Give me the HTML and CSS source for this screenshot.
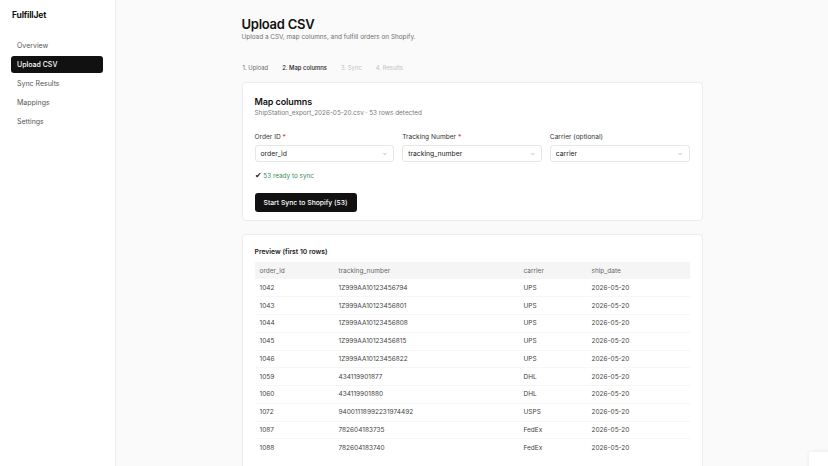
FILE: index.html
```html
<!DOCTYPE html>
<html lang="en">
<head>
<meta charset="utf-8">
<title>FulfillJet – Upload CSV</title>
<link rel="stylesheet" href="styles.css">
</head>
<body>
<div class="app">
  <aside class="sidebar">
    <div class="brand">FulfillJet</div>
    <nav class="nav">
      <a class="nav-item">Overview</a>
      <a class="nav-item active">Upload CSV</a>
      <a class="nav-item">Sync Results</a>
      <a class="nav-item">Mappings</a>
      <a class="nav-item">Settings</a>
    </nav>
  </aside>
  <main class="main">
    <div class="content">
      <header class="page-head">
        <h1 class="title">Upload CSV</h1>
        <p class="subtitle">Upload a CSV, map columns, and fulfill orders on Shopify.</p>
      </header>
      <div class="steps">
        <span class="step done">1. Upload</span>
        <span class="step current">2. Map columns</span>
        <span class="step todo">3. Sync</span>
        <span class="step todo">4. Results</span>
      </div>
      <section class="card map-card">
        <h2 class="card-title">Map columns</h2>
        <p class="file-line">ShipStation_export_2026-05-20.csv · 53 rows detected</p>
        <div class="fields">
          <div class="field">
            <label class="label">Order ID <span class="req">*</span></label>
            <div class="select"><span>order_id</span><span class="chev">⌄</span></div>
          </div>
          <div class="field">
            <label class="label">Tracking Number <span class="req">*</span></label>
            <div class="select"><span>tracking_number</span><span class="chev">⌄</span></div>
          </div>
          <div class="field">
            <label class="label">Carrier (optional)</label>
            <div class="select"><span>carrier</span><span class="chev">⌄</span></div>
          </div>
        </div>
        <p class="ready"><span class="check">✔</span> 53 ready to sync</p>
        <button class="btn">Start Sync to Shopify (53)</button>
      </section>
      <section class="card preview-card">
        <h3 class="preview-title">Preview (first 10 rows)</h3>
        <table class="table">
          <colgroup>
            <col class="c1"><col class="c2"><col class="c3"><col class="c4">
          </colgroup>
          <thead>
            <tr><th>order_id</th><th>tracking_number</th><th>carrier</th><th>ship_date</th></tr>
          </thead>
          <tbody>
            <tr><td>1042</td><td>1Z999AA10123456794</td><td>UPS</td><td>2026-05-20</td></tr>
            <tr><td>1043</td><td>1Z999AA10123456801</td><td>UPS</td><td>2026-05-20</td></tr>
            <tr><td>1044</td><td>1Z999AA10123456808</td><td>UPS</td><td>2026-05-20</td></tr>
            <tr><td>1045</td><td>1Z999AA10123456815</td><td>UPS</td><td>2026-05-20</td></tr>
            <tr><td>1046</td><td>1Z999AA10123456822</td><td>UPS</td><td>2026-05-20</td></tr>
            <tr><td>1059</td><td>434119901877</td><td>DHL</td><td>2026-05-20</td></tr>
            <tr><td>1060</td><td>434119901880</td><td>DHL</td><td>2026-05-20</td></tr>
            <tr><td>1072</td><td>94001118992231974492</td><td>USPS</td><td>2026-05-20</td></tr>
            <tr><td>1087</td><td>782604183735</td><td>FedEx</td><td>2026-05-20</td></tr>
            <tr><td>1088</td><td>782604183740</td><td>FedEx</td><td>2026-05-20</td></tr>
          </tbody>
        </table>
      </section>
    </div>
  </main>
</div>
<div class="corner-box"></div>
</body>
</html>
```

FILE: styles.css
```css
* { box-sizing: border-box; }
html, body {
  margin: 0;
  padding: 0;
  height: 100%;
  overflow: hidden;
}
body {
  font-family: Inter, "Noto Sans", "Liberation Sans", sans-serif;
  color: #1a1a1a;
  background: #fafafa;
  -webkit-font-smoothing: antialiased;
}
.app {
  display: flex;
  height: 466px;
}
.sidebar {
  width: 116px;
  flex: none;
  background: #ffffff;
  border-right: 1px solid #ededed;
  padding: 10px 12px 0 11px;
}
.brand {
  font-size: 8.5px;
  font-weight: 700;
  letter-spacing: -0.02em;
  color: #111;
  padding-left: 1px;
  line-height: 10px;
}
.nav {
  display: flex;
  flex-direction: column;
  gap: 2px;
  margin-top: 17px;
}
.nav-item {
  display: block;
  height: 17px;
  line-height: 17px;
  padding-left: 6px;
  font-size: 7px;
  color: #555;
  border-radius: 3px;
}
.nav-item.active {
  background: #111;
  color: #fff;
  font-weight: 500;
}
.main {
  flex: 1;
  background: #fafafa;
}
.content {
  width: 461px;
  margin: 0 auto;
  padding-top: 16px;
}
.title {
  margin: 0;
  font-size: 13px;
  font-weight: 600;
  letter-spacing: -0.02em;
  line-height: 16px;
  color: #111;
}
.subtitle {
  margin: 1px 0 0;
  font-size: 6.4px;
  color: #707070;
  line-height: 9px;
}
.steps {
  display: flex;
  gap: 14px;
  margin-top: 22px;
  margin-left: 1px;
  font-size: 5.9px;
  line-height: 8px;
}
.step.done { color: #6b6b6b; }
.step.current { color: #222; font-weight: 500; }
.step.todo { color: #c2c2c2; }
.card {
  background: #fff;
  border: 1px solid #ececec;
  border-radius: 4px;
}
.map-card {
  margin-top: 10px;
  padding: 13px 12px 11px 12px;
  height: 139px;
}
.card-title {
  margin: 0;
  font-size: 9px;
  font-weight: 600;
  line-height: 12px;
  color: #111;
  letter-spacing: -0.01em;
}
.file-line {
  margin: 1px 0 0;
  font-size: 6.4px;
  line-height: 9px;
  color: #7a7a7a;
}
.fields {
  display: flex;
  gap: 8px;
  margin-top: 15px;
}
.field {
  flex: 1;
  display: flex;
  flex-direction: column;
}
.label {
  font-size: 6.6px;
  line-height: 9px;
  color: #333;
}
.req { color: #c0392b; }
.select {
  margin-top: 3px;
  height: 17px;
  border: 1px solid #e6e6e6;
  border-radius: 3px;
  display: flex;
  align-items: center;
  justify-content: space-between;
  padding: 0 6px 0 5px;
  font-size: 6.8px;
  color: #222;
  background: #fff;
}
.chev {
  font-size: 6px;
  color: #aaa;
  line-height: 6px;
  margin-top: -2px;
}
.ready {
  margin: 9px 0 0;
  font-size: 6.4px;
  line-height: 9px;
  color: #3c8a5a;
}
.check { color: #222; font-size: 7.5px; }
.btn {
  margin-top: 12px;
  display: block;
  height: 19px;
  padding: 0 9px;
  background: #111;
  color: #fff;
  border: 0;
  border-radius: 3px;
  font-family: inherit;
  font-size: 6.8px;
  font-weight: 500;
}
.preview-card {
  margin-top: 13px;
  padding: 11px 12px 12px 12px;
}
.preview-title {
  margin: 0;
  font-size: 6.8px;
  font-weight: 600;
  line-height: 11px;
  color: #222;
}
.table {
  margin-top: 5px;
  width: 435px;
  border-collapse: collapse;
  table-layout: fixed;
  font-size: 6.5px;
  color: #444;
}
.c1 { width: 79px; }
.c2 { width: 185px; }
.c3 { width: 68px; }
.c4 { width: 103px; }
.table th {
  background: #f5f5f5;
  font-weight: 400;
  color: #666;
  text-align: left;
  height: 17px;
  padding: 0 5px;
}
.table td {
  height: 17.75px;
  padding: 0 5px;
  border-bottom: 1px solid #f6f6f6;
}
.table tbody tr:last-child td { border-bottom: 0; }
.corner-box {
  position: fixed;
  left: 809px;
  top: 452px;
  width: 30px;
  height: 20px;
  background: #fff;
  border-radius: 3px;
  box-shadow: 0 0 4px rgba(0,0,0,0.08);
}
```
